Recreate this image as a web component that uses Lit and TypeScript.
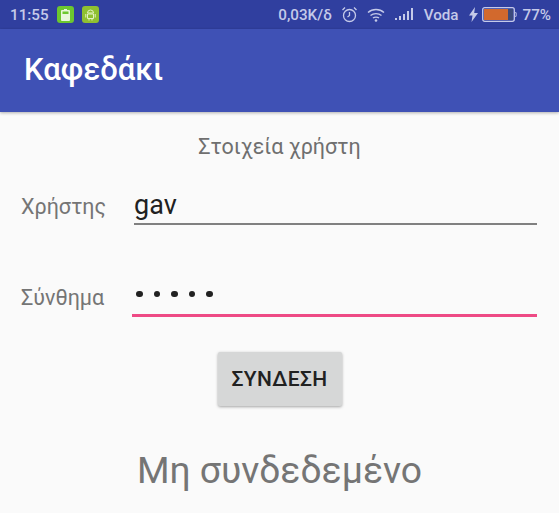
import { LitElement, html, css } from "lit";
import { customElement } from "lit/decorators.js";

@customElement("app-root")
export class AppRoot extends LitElement {
  static styles = css`
    :host { display: block; width: 559px; height: 513px; overflow: hidden; background: #fafafa; font-family: Roboto, "Noto Sans", sans-serif; }
    .status { height: 29px; background: #303f9f; display: flex; align-items: center; color: #c5cae9; font-size: 15.200px; font-weight: 500; padding: 0 8px 0 10px; box-sizing: border-box; }
    .time { width: 47px; }
    .badge { width: 17px; height: 17px; border-radius: 3px; display: flex; align-items: center; justify-content: center; margin-right: 8px; }
    .green { background: #6cc72f; }
    .olive { background: #8fc031; }
    .spacer { flex: 1; }
    .st { display: flex; align-items: center; }
    .st svg { display: block; }
    .m-alarm { margin-left: 9px; }
    .m-wifi { margin-left: 9px; }
    .m-signal { margin-left: 10px; }
    .m-voda { margin-left: 9px; }
    .m-bolt { margin-left: 10px; }
    .m-batt { margin-left: 4px; }
    .m-pct { margin-left: 6px; }
    .bar { height: 83px; background: #3f51b5; box-shadow: 0 1px 3px rgba(0,0,0,.3); display: flex; align-items: center; padding: 0 0 2px 24px; box-sizing: border-box; color: #fff; font-size: 31px; font-weight: 500; }
    .title { text-align: center; color: #6f6f6f; font-size: 21.500px; margin-top: 23px; line-height: 24px; }
    .row { display: flex; align-items: flex-end; padding: 0 22px 0 21px; }
    .lbl { color: #757575; font-size: 21.500px; line-height: 24px; }
    .f1 { margin-top: 28px; }
    .f1 .lbl { width: 113px; padding-bottom: 6px; }
    .f1 .input { flex: 1; border-bottom: 2px solid #808080; font-size: 27px; color: #212121; line-height: 36px; height: 36px; }
    .f2 { margin-top: 52px; }
    .f2 .lbl { width: 111px; padding-bottom: 7px; }
    .f2 .input { flex: 1; border-bottom: 3px solid #ee4a85; height: 40px; display: flex; align-items: center; gap: 11px; padding: 0 0 3px 4px; box-sizing: border-box; }
    .dot { width: 6.500px; height: 6.500px; background: #212121; border-radius: 50%; }
    .btnrow { display: flex; justify-content: center; margin-top: 35px; }
    .btn { width: 124px; height: 54px; background: #d6d7d7; border-radius: 2px; box-shadow: 0 1px 3px rgba(0,0,0,.35); color: #212121; font-size: 21px; font-weight: 500; display: flex; align-items: center; justify-content: center; letter-spacing: .3px; }
    .state { text-align: center; color: #757575; font-size: 37.300px; margin-top: 44px; line-height: 40px; }
  `;

  render() {
    return html`
      <div class="status">
        <span class="time">11:55</span>
        <span class="badge green">
          <svg width="9" height="12" viewBox="0 0 9 12"><path d="M3 0h3v1h2a1 1 0 0 1 1 1v9a1 1 0 0 1-1 1H1a1 1 0 0 1-1-1V2a1 1 0 0 1 1-1h2z" fill="#e8f7da"/><path d="M1.500 2.500h6v2.500h-6z" fill="#6cc72f"/></svg>
        </span>
        <span class="badge olive">
          <svg width="11" height="12" viewBox="0 0 11 12" fill="none" stroke="#e4f2c4" stroke-width="1"><path d="M2.500 5h6v4.500h-6zM2.500 4a3 3 0 0 1 6 0zM.8 5v3.500M10.200 5v3.500M4 9.500v2M7 9.500v2"/></svg>
        </span>
        <span class="spacer"></span>
        <span class="st">
          <span>0,03K/δ</span>
          <svg class="m-alarm" width="17" height="17" viewBox="0 0 17 17" fill="none" stroke="#c5cae9" stroke-width="1.300"><circle cx="8.500" cy="9.500" r="6"/><path d="M8.500 6v3.500l-2 1.500M1.500 4 4 1.500M15.500 4 13 1.500"/></svg>
          <svg class="m-wifi" width="18" height="14" viewBox="0 0 18 14" fill="none" stroke="#c5cae9" stroke-width="1.400"><path d="M1 4.500c4.500-4 11.500-4 16 0M3.500 7.500c3-2.500 8-2.500 11 0M6 10c1.500-1.200 4.500-1.200 6 0"/><circle cx="9" cy="12.500" r="1.300" fill="#c5cae9" stroke="none"/></svg>
          <svg class="m-signal" width="20" height="13" viewBox="0 0 20 13" fill="#c5cae9"><rect x="0" y="10" width="2" height="2"/><rect x="4" y="8" width="2" height="4"/><rect x="8" y="6" width="2" height="6"/><rect x="12" y="3" width="2" height="9"/><rect x="16" y="0" width="2" height="12"/></svg>
          <span class="m-voda">Voda</span>
          <svg class="m-bolt" width="9" height="15" viewBox="0 0 9 15" fill="#c5cae9"><path d="M6 0 0 8.500h3.500L2.500 15 9 6H5.200z"/></svg>
          <svg class="m-batt" width="35" height="15" viewBox="0 0 35 15"><rect x=".7" y=".7" width="31.600" height="13.600" rx="2" fill="none" stroke="#c5cae9" stroke-width="1.300"/><rect x="2" y="2" width="24" height="11" fill="#d2692d"/><rect x="26" y="2" width="5" height="11" fill="#3b4a7c"/><path d="M33.500 5c1 1 1 4 0 5" stroke="#c5cae9" fill="none"/></svg>
          <span class="m-pct">77%</span>
        </span>
      </div>
      <div class="bar">Καφεδάκι</div>
      <div class="title">Στοιχεία χρήστη</div>
      <div class="row f1"><div class="lbl">Χρήστης</div><div class="input">gav</div></div>
      <div class="row f2"><div class="lbl">Σύνθημα</div><div class="input"><i class="dot"></i><i class="dot"></i><i class="dot"></i><i class="dot"></i><i class="dot"></i></div></div>
      <div class="btnrow"><div class="btn">ΣΥΝΔΕΣΗ</div></div>
      <div class="state">Μη συνδεδεμένο</div>
    `;
  }
}
